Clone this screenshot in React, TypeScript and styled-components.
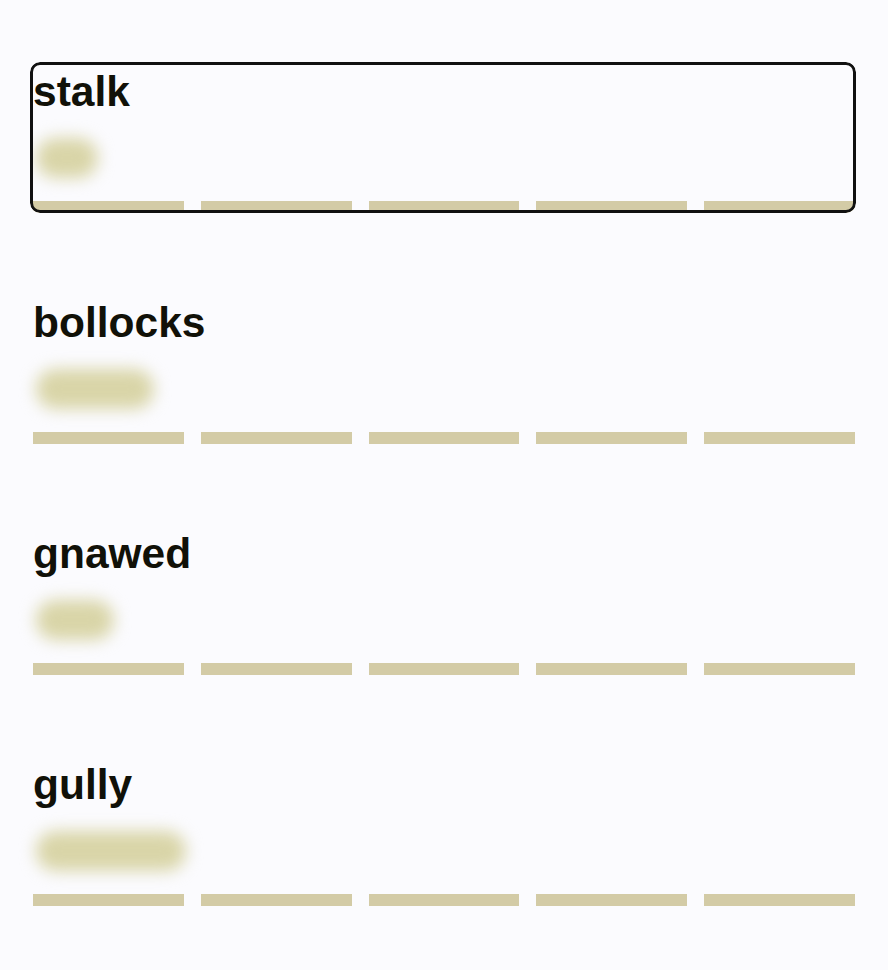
import React from "react";
import styled, { createGlobalStyle, css } from "styled-components";

const Global = createGlobalStyle`
  html, body {
    margin: 0;
    padding: 0;
    background: #fbfbfe;
  }
  body {
    font-family: "Liberation Sans", Arial, sans-serif;
    color: #111108;
  }
`;

const Page = styled.main`
  box-sizing: border-box;
  width: 888px;
  min-height: 970px;
  padding: 62px 32px 40px 30px;
  display: flex;
  flex-direction: column;
  gap: 80px;
`;

const Item = styled.section<{ $selected?: boolean }>`
  position: relative;
  box-sizing: border-box;
  height: 151px;
  padding: 0 1px 0 3px;
  display: flex;
  flex-direction: column;
  align-items: flex-start;

  ${(p) =>
    p.$selected &&
    css`
      border-radius: 10px;
      overflow: hidden;
      &::after {
        content: "";
        position: absolute;
        inset: 0;
        border-radius: 10px;
        border: 3px solid #111111;
        pointer-events: none;
      }
    `}
`;

const Title = styled.h2`
  margin: 9px 0 0 0;
  font-size: 42.5px;
  line-height: 42px;
  font-weight: 700;
  letter-spacing: 0;
`;

const Pill = styled.div<{ $w: number }>`
  margin-top: 25px;
  margin-left: 3px;
  width: ${(p) => p.$w}px;
  height: 40px;
  border-radius: 20px;
  background: #d9d5a8;
  filter: blur(8px);
`;

const Bars = styled.div`
  margin-top: auto;
  align-self: stretch;
  display: grid;
  grid-template-columns: repeat(5, 1fr);
  gap: 17px;
`;

const Bar = styled.div`
  height: 12px;
  background: #d3cba6;
`;

const words = [
  { word: "stalk", pill: 62, selected: true },
  { word: "bollocks", pill: 118 },
  { word: "gnawed", pill: 78 },
  { word: "gully", pill: 150 },
];

export default function App() {
  return (
    <>
      <Global />
      <Page>
        {words.map((w) => (
          <Item key={w.word} $selected={w.selected}>
            <Title>{w.word}</Title>
            <Pill $w={w.pill} />
            <Bars>
              {[0, 1, 2, 3, 4].map((i) => (
                <Bar key={i} />
              ))}
            </Bars>
          </Item>
        ))}
      </Page>
    </>
  );
}
